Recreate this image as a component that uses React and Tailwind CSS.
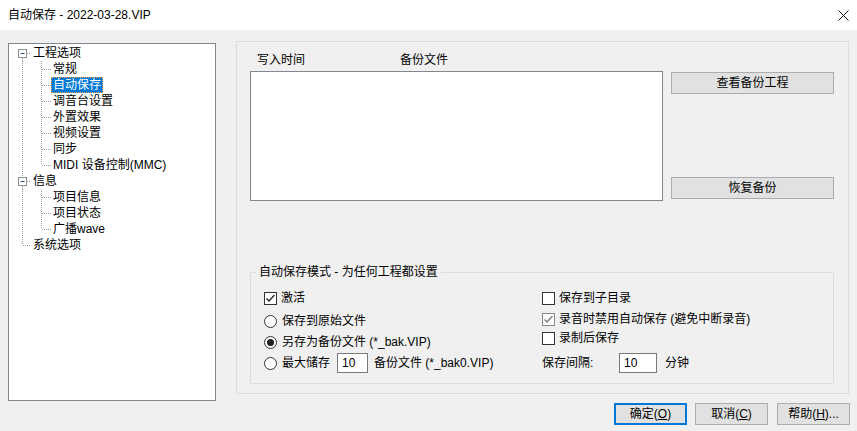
import React from 'react'

const FONT = "font-['Liberation_Sans','Noto_Sans_CJK_SC',sans-serif]"

// dotted connector lines for one tree row
function Connector({ type, last, width }) {
  const dot = { stroke: '#a0a0a0', strokeWidth: 1, strokeDasharray: '1 1' }
  return (
    <svg width={width} height="16" className="shrink-0">
      {type === 'rootOpen' && (
        <>
          {!last && <line x1="13.5" y1="0" x2="13.5" y2="4" {...dot} />}
          <line x1="13.5" y1="13" x2="13.5" y2="16" {...dot} />
          <line x1="18" y1="8.5" x2="22" y2="8.5" {...dot} />
          <rect x="9.5" y="4.5" width="8" height="8" fill="#fff" stroke="#919191" />
          <line x1="11.5" y1="8.5" x2="15.5" y2="8.5" stroke="#2b4f8a" />
        </>
      )}
      {type === 'rootLeaf' && (
        <>
          <line x1="13.5" y1="0" x2="13.5" y2="8" {...dot} />
          <line x1="14" y1="8.5" x2="22" y2="8.5" {...dot} />
        </>
      )}
      {type === 'child' && (
        <>
          <line x1="13.5" y1="0" x2="13.5" y2="16" {...dot} />
          <line x1="32.5" y1="0" x2="32.5" y2={last ? 8 : 16} {...dot} />
          <line x1="33" y1="8.5" x2="42" y2="8.5" {...dot} />
        </>
      )}
    </svg>
  )
}

function TreeRow({ type, last, label, selected }) {
  const width = type === 'child' ? 42 : 22
  return (
    <div className="flex h-[16px] items-center">
      <Connector type={type} last={last} width={width} />
      <span
        className={
          selected
            ? 'h-[16px] px-[1px] leading-[14px] bg-[#0078d7] text-white border border-dotted border-[#f5a04a]'
            : 'h-[16px] px-[2px] leading-[16px] text-black'
        }
      >
        {label}
      </span>
    </div>
  )
}

function CheckBox({ checked, dim }) {
  return (
    <span
      className={`w-[13px] h-[13px] shrink-0 bg-white border flex items-center justify-center ${
        dim ? 'border-[#8a8a8a]' : 'border-[#333333]'
      }`}
    >
      {checked && (
        <svg width="11" height="11" viewBox="0 0 11 11">
          <polyline
            points="1.5,5.5 4,8 9.5,2"
            fill="none"
            stroke={dim ? '#7a7a7a' : '#222'}
            strokeWidth="1.3"
          />
        </svg>
      )}
    </span>
  )
}

function Radio({ checked }) {
  return (
    <span className="w-[13px] h-[13px] shrink-0 rounded-full bg-white border border-[#333333] flex items-center justify-center">
      {checked && <span className="w-[7px] h-[7px] rounded-full bg-[#222]" />}
    </span>
  )
}

function WinButton({ children, primary, className = '' }) {
  return (
    <button
      className={`h-[22px] bg-[#e1e1e1] text-[12px] text-black flex items-center justify-center ${
        primary ? 'border-2 border-[#0078d7]' : 'border border-[#adadad]'
      } ${className}`}
    >
      {children}
    </button>
  )
}

export default function App() {
  return (
    <div className={`w-[857px] h-[431px] bg-[#f0f0f0] flex flex-col text-[12px] text-black ${FONT}`}>
      {/* Title bar */}
      <div className="h-[30px] bg-white flex items-center justify-between pl-[8px] pr-[8px] shrink-0">
        <span className="text-[12px]">自动保存 - 2022-03-28.VIP</span>
        <svg width="11" height="11" viewBox="0 0 11 11" className="mr-[0px]">
          <line x1="0.5" y1="0.5" x2="10.5" y2="10.5" stroke="#111" />
          <line x1="10.5" y1="0.5" x2="0.5" y2="10.5" stroke="#111" />
        </svg>
      </div>

      <div className="flex items-start">
        {/* Tree */}
        <div className="ml-[8px] mt-[13px] w-[208px] h-[358px] bg-white border border-[#828790] pt-[1px]">
          <TreeRow type="rootOpen" last label="工程选项" />
          <TreeRow type="child" label="常规" />
          <TreeRow type="child" label="自动保存" selected />
          <TreeRow type="child" label="调音台设置" />
          <TreeRow type="child" label="外置效果" />
          <TreeRow type="child" label="视频设置" />
          <TreeRow type="child" label="同步" />
          <TreeRow type="child" last label="MIDI 设备控制(MMC)" />
          <TreeRow type="rootOpen" label="信息" />
          <TreeRow type="child" label="项目信息" />
          <TreeRow type="child" label="项目状态" />
          <TreeRow type="child" last label="广播wave" />
          <TreeRow type="rootLeaf" label="系统选项" />
        </div>

        {/* Right page */}
        <div className="ml-[20px] mt-[11px] w-[613px] h-[353px] border border-[#dcdcdc] pl-[13px] pt-[10px]">
          <div className="flex h-[16px] items-center">
            <span className="ml-[7px] w-[143px]">写入时间</span>
            <span>备份文件</span>
          </div>

          <div className="flex mt-[3px] gap-[8px]">
            <div className="w-[413px] h-[130px] bg-white border border-[#828790]" />
            <div className="w-[163px] h-[127px] mt-[1px] flex flex-col justify-between">
              <WinButton className="w-full">查看备份工程</WinButton>
              <WinButton className="w-full">恢复备份</WinButton>
            </div>
          </div>

          {/* Group box */}
          <fieldset className="mt-[63px] w-[584px] border border-[#dcdcdc] pb-[10px]">
            <legend className="ml-[5px] px-[3px] leading-[16px]">自动保存模式 - 为任何工程都设置</legend>
            <div className="flex pl-[13px] mt-[10px]">
              <div className="w-[278px] flex flex-col">
                <label className="h-[16px] flex items-center gap-[4px]">
                  <CheckBox checked />
                  <span>激活</span>
                </label>
                <label className="h-[16px] mt-[7px] flex items-center gap-[5px]">
                  <Radio />
                  <span>保存到原始文件</span>
                </label>
                <label className="h-[16px] mt-[5px] flex items-center gap-[5px]">
                  <Radio checked />
                  <span>另存为备份文件 (*_bak.VIP)</span>
                </label>
                <div className="h-[20px] mt-[3px] flex items-center">
                  <Radio />
                  <span className="ml-[5px]">最大储存</span>
                  <span className="ml-[7px] w-[31px] h-[20px] bg-white border border-[#7a7a7a] pl-[4px] leading-[18px]">10</span>
                  <span className="ml-[6px]">备份文件 (*_bak0.VIP)</span>
                </div>
              </div>
              <div className="flex flex-col">
                <label className="h-[16px] flex items-center gap-[4px]">
                  <CheckBox />
                  <span>保存到子目录</span>
                </label>
                <label className="h-[16px] mt-[5px] flex items-center gap-[4px]">
                  <CheckBox checked dim />
                  <span>录音时禁用自动保存 (避免中断录音)</span>
                </label>
                <label className="h-[16px] mt-[3px] flex items-center gap-[4px]">
                  <CheckBox />
                  <span>录制后保存</span>
                </label>
                <div className="h-[20px] mt-[7px] flex items-center">
                  <span className="w-[77px]">保存间隔:</span>
                  <span className="w-[38px] h-[20px] bg-white border border-[#7a7a7a] pl-[4px] leading-[18px]">10</span>
                  <span className="ml-[8px]">分钟</span>
                </div>
              </div>
            </div>
          </fieldset>
        </div>
      </div>

      {/* Dialog buttons */}
      <div className="flex justify-end pr-[7px] mt-[2px]">
        <WinButton primary className="w-[73px]">
          确定(<span className="underline">O</span>)
        </WinButton>
        <WinButton className="w-[73px] ml-[8px]">
          取消(<span className="underline">C</span>)
        </WinButton>
        <WinButton className="w-[73px] ml-[9px]">
          帮助(<span className="underline">H</span>)...
        </WinButton>
      </div>
    </div>
  )
}
